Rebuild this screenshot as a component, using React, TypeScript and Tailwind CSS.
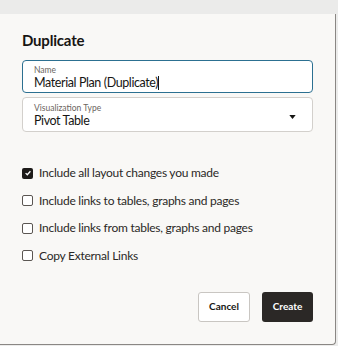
const options = [
  { label: "Include all layout changes you made", checked: true },
  { label: "Include links to tables, graphs and pages", checked: false },
  { label: "Include links from tables, graphs and pages", checked: false },
  { label: "Copy External Links", checked: false },
];

function Checkbox({ checked }: { checked: boolean }) {
  if (checked) {
    return (
      <span className="w-[11px] h-[11px] rounded-[2px] bg-[#1d1b19] flex items-center justify-center shrink-0">
        <svg viewBox="0 0 10 10" className="w-[8px] h-[8px]">
          <path d="M2 5.2 L4.1 7.2 L8 2.8" fill="none" stroke="#fff" strokeWidth="1.6" />
        </svg>
      </span>
    );
  }
  return <span className="w-[11px] h-[11px] rounded-[2px] border border-[#5b5652] bg-white shrink-0" />;
}

export default function App() {
  return (
    <div className="w-[338px] h-[346px] bg-[#ececeb] relative overflow-hidden" style={{ fontFamily: 'Lato, "Noto Sans", sans-serif' }}>
      <div className="h-[14px] bg-[#ebebea]" />
      <div className="absolute left-0 top-[14px] w-[336px] h-[331px] bg-[#f9f8f6] border-r border-b border-[#8a8784] rounded-br-[4px]">
        <div className="px-[22px]">
          <h1 className="text-[15px] font-bold text-[#161513] leading-none pt-[19px] tracking-[-0.2px]">Duplicate</h1>

          {/* Name */}
          <div className="mt-[12px] h-[33px] rounded-[4px] border border-[#2c7091] bg-white px-[11px] pt-[4px]">
            <div className="text-[8.5px] leading-[10px] text-[#6b6560]">Name</div>
            <div className="text-[12.5px] leading-[16px] text-[#161513] tracking-[-0.4px] flex items-center">
              Material Plan (Duplicate)
              <span className="w-px h-[14px] bg-[#161513]" />
            </div>
          </div>

          {/* Visualization type */}
          <div className="mt-[4px] h-[35px] rounded-[4px] border border-[#d3d0cc] bg-white px-[11px] pt-[5px] flex items-start justify-between">
            <div>
              <div className="text-[8.5px] leading-[10px] text-[#6b6560]">Visualization Type</div>
              <div className="text-[12.5px] leading-[16px] text-[#161513] tracking-[-0.4px]">Pivot Table</div>
            </div>
            <svg viewBox="0 0 8 5" className="w-[7px] h-[4px] mt-[12px] mr-[5px]">
              <path d="M0 0 L8 0 L4 5 Z" fill="#161513" />
            </svg>
          </div>

          {/* Options */}
          <div className="mt-[33px] flex flex-col gap-[11.5px]">
            {options.map((o) => (
              <label key={o.label} className="flex items-center gap-[6px] h-[16px]">
                <Checkbox checked={o.checked} />
                <span className="text-[12px] text-[#2b2826] leading-none tracking-[-0.25px]">{o.label}</span>
              </label>
            ))}
          </div>

          {/* Footer */}
          <div className="mt-[28px] flex justify-end gap-[12px]">
            <button className="w-[52px] h-[30px] rounded-[3px] border border-[#c9c6c2] bg-white text-[10px] font-bold text-[#161513]">
              Cancel
            </button>
            <button className="w-[51px] h-[30px] rounded-[3px] bg-[#2b2826] text-[10px] font-bold text-white">
              Create
            </button>
          </div>
        </div>
      </div>
    </div>
  );
}
